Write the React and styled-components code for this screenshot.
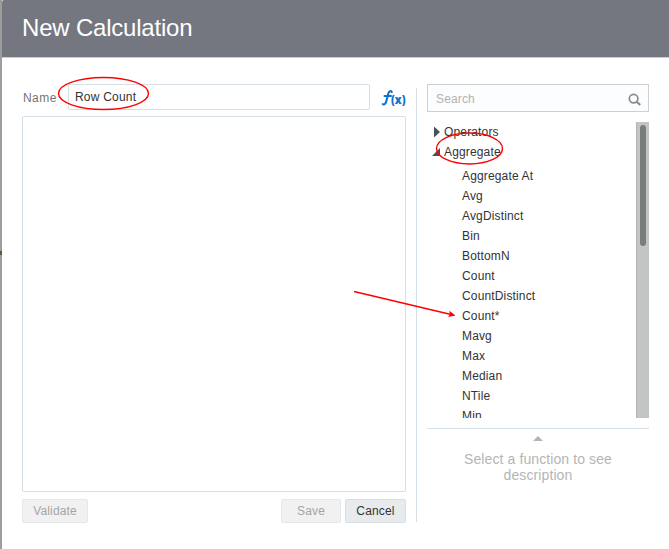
import React from "react";
import styled, { createGlobalStyle } from "styled-components";

const GlobalStyle = createGlobalStyle`
  *, *::before, *::after { box-sizing: border-box; }
  body { margin: 0; background: #fff; overflow: hidden; }
  input, textarea, button { font: inherit; outline: none; }
`;

const Screen = styled.div`
  position: relative;
  display: flex;
  width: 669px;
  height: 549px;
  overflow: hidden;
  background: #fff;
  color: #333;
  font: 12px/20px "Liberation Sans", Arial, sans-serif;
`;

const Backdrop = styled.div`
  width: 2px;
  flex: none;
  background: linear-gradient(#9d9d9d 0 250px, #a39b70 250px 251px, #5c574a 251px 255px, #a39b70 255px 256px, #9d9d9d 256px);
`;

const Dialog = styled.section`
  flex: 1;
  display: flex;
  flex-direction: column;
`;

const Header = styled.header`
  height: 58px;
  flex: none;
  padding: 14px 20px 0;
  background: #747680;
  border-bottom: 1px solid #c9cbd8;
  border-top-left-radius: 2px;
`;

const Title = styled.h1`
  margin: 0;
  color: #fff;
  font-size: 24px;
  font-weight: 400;
  line-height: 28px;
  letter-spacing: -0.2px;
`;

const Body = styled.main`
  display: flex;
  padding: 26px 20px 0;
`;

const Editor = styled.div`
  width: 384px;
  display: flex;
  flex-direction: column;
`;

const NameRow = styled.label`
  display: flex;
  height: 26px;
  color: #757575;
`;

const NameLabel = styled.span`
  width: 46px;
  padding: 4px 0 0 1px;
  letter-spacing: 0.45px;
`;

const NameInput = styled.input`
  width: 302px;
  height: 26px;
  padding: 0 6px;
  border: 1px solid #d6dfe6;
  border-radius: 2px;
  color: #333;
  letter-spacing: 0.2px;
`;

const FunctionIcon = styled.svg`
  margin: 3px 0 0 10px;
  flex: none;
  overflow: visible;
`;

const Formula = styled.textarea`
  height: 376px;
  margin-top: 6px;
  resize: none;
  border: 1px solid #d6dfe6;
  border-radius: 2px;
`;

const Actions = styled.footer`
  display: flex;
  gap: 4px;
  margin-top: 7px;
`;

const Button = styled.button`
  width: ${(p) => p.$width}px;
  height: 24px;
  padding: 0;
  margin-right: ${(p) => (p.$pushRest ? "auto" : 0)};
  border: 1px solid #d6dfe6;
  border-radius: 2px;
  background: #e7ebee;
  color: #333;
  line-height: 22px;
  letter-spacing: 0.15px;
  &:disabled {
    border-color: #e5e7e9;
    background: #f1f1f1;
    color: #a5a5a5;
  }
`;

const Divider = styled.div`
  width: 1px;
  height: 434px;
  margin: 4px 10px 0;
  background: #d6dfe6;
`;

const Functions = styled.aside`
  width: 222px;
`;

const Search = styled.div`
  display: flex;
  height: 28px;
  padding: 0 7px 0 8px;
  border: 1px solid #cdcfd1;
  background: #fcfdfe;
`;

const SearchInput = styled.input`
  flex: 1;
  min-width: 0;
  padding: 2px 0 0;
  border: 0;
  background: transparent;
  letter-spacing: 0.15px;
  &::placeholder { color: #b3b3b3; opacity: 1; }
`;

const SearchIcon = styled.svg`
  margin-top: 8px;
  flex: none;
`;

const TreePane = styled.div`
  display: flex;
  height: 296px;
  margin-top: 10px;
  overflow: hidden;
`;

const Tree = styled.div`
  flex: 1;
  padding-left: 5px;
  letter-spacing: 0.15px;
`;

const Group = styled.div`
  display: flex;
  align-items: center;
  height: 20px;
`;

const GroupArrow = styled.svg`
  margin-right: 3px;
`;

const Items = styled.ul`
  margin: 4px 0 0;
  padding: 0 0 0 30px;
  list-style: none;
`;

const Item = styled.li`
  height: 20px;
`;

const ScrollTrack = styled.div`
  width: 13px;
  padding: 3px 3px 0;
  border-left: 1px solid #b3b5b4;
  background: #c3c5c4;
`;

const ScrollThumb = styled.div`
  height: 121px;
  border-radius: 3px;
  background: #797d7d;
`;

const Description = styled.div`
  display: flex;
  flex-direction: column;
  align-items: center;
  margin-top: 10px;
  padding-top: 7px;
  border-top: 1px solid #d6dfe6;
  color: #b5b5b5;
`;

const DescriptionText = styled.p`
  width: 170px;
  margin: 10px 0 0;
  font-size: 14px;
  line-height: 16px;
  letter-spacing: 0.1px;
  text-align: center;
`;

const Annotations = styled.svg`
  position: absolute;
  inset: 0;
  pointer-events: none;
`;

const functions = [
  "Aggregate At", "Avg", "AvgDistinct", "Bin", "BottomN", "Count",
  "CountDistinct", "Count*", "Mavg", "Max", "Median", "NTile", "Min",
];

export default function App() {
  return (
    <Screen>
      <GlobalStyle />
      <Backdrop />
      <Dialog>
        <Header>
          <Title>New Calculation</Title>
        </Header>
        <Body>
          <Editor>
            <NameRow>
              <NameLabel>Name</NameLabel>
              <NameInput defaultValue="Row Count" />
              <FunctionIcon width="26" height="22" viewBox="0 0 26 22" fill="#0c74d0">
                <path d="M11.8 5C11 3.7 9 3.9 8.4 6.2L6.2 14.6C5.7 16.8 4.2 18 2.8 17.2M4.6 9h6.4" fill="none" stroke="#0c74d0" strokeWidth="2.1" strokeLinecap="round" />
                <text x="11" y="17" fontFamily="Open Sans, sans-serif" fontWeight="800" fontSize="12" textLength="14.5" lengthAdjust="spacingAndGlyphs">(x)</text>
              </FunctionIcon>
            </NameRow>
            <Formula />
            <Actions>
              <Button $width={66} $pushRest disabled>Validate</Button>
              <Button $width={60} disabled>Save</Button>
              <Button $width={61}>Cancel</Button>
            </Actions>
          </Editor>
          <Divider />
          <Functions>
            <Search>
              <SearchInput placeholder="Search" />
              <SearchIcon width="13" height="13" viewBox="0 0 13 13" fill="none" stroke="#868c92">
                <circle cx="5.6" cy="5.6" r="4.3" strokeWidth="1.7" />
                <path d="M8.7 8.7l3.5 3.4" strokeWidth="2.1" />
              </SearchIcon>
            </Search>
            <TreePane>
              <Tree>
                <Group>
                  <GroupArrow width="9" height="12" viewBox="0 0 9 12">
                    <path d="M2 0.5v11L8 6z" fill="#4b5053" />
                  </GroupArrow>
                  Operators
                </Group>
                <Group>
                  <GroupArrow width="9" height="12" viewBox="0 0 9 12">
                    <path d="M8 2v8H0z" fill="#4b5053" />
                  </GroupArrow>
                  Aggregate
                </Group>
                <Items>
                  {functions.map((name) => <Item key={name}>{name}</Item>)}
                </Items>
              </Tree>
              <ScrollTrack>
                <ScrollThumb />
              </ScrollTrack>
            </TreePane>
            <Description>
              <svg width="10" height="5" viewBox="0 0 10 5">
                <path d="M0 5L5 0l5 5z" fill="#b3b5b5" />
              </svg>
              <DescriptionText>Select a function to see description</DescriptionText>
            </Description>
          </Functions>
        </Body>
      </Dialog>
      <Annotations width="669" height="549" fill="none" stroke="#ff0000" strokeWidth="1.4">
        <ellipse cx="103.5" cy="93.5" rx="45" ry="16" />
        <ellipse cx="469.5" cy="148.5" rx="33" ry="15.5" />
        <path d="M354 291.5L450 314.2" />
        <path d="M455.5 315.6l-7.4 1.4 1.8-2.7-.6-3.6z" fill="#ff0000" stroke="none" />
      </Annotations>
    </Screen>
  );
}
